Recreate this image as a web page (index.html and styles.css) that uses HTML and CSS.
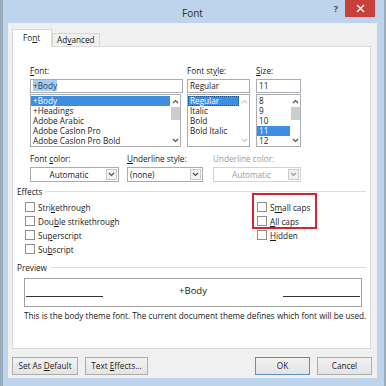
FILE: index.html
```html
<!DOCTYPE html>
<html>
  <head>
    <title>Font</title>
    <link rel="stylesheet" href="styles.css">
  </head>
  <body>
    <div class="window">
      <div class="titlebar">
        <span></span>
        <span class="title">Font</span>
        <div class="caption-btns">
          <span class="help">?</span>
          <span class="close">
            <svg width="9" height="9" viewBox="0 0 9 9"><path d="M1 1L8 8M8 1L1 8" stroke="#fff" stroke-width="1.4" /></svg>
          </span>
        </div>
      </div>

      <div class="client">
        <div class="tabs">
          <span class="tab active">Fo<u>n</u>t</span>
          <span class="tab">Ad<u>v</u>anced</span>
        </div>

        <div class="page">
          <!-- font / style / size pickers -->
          <div class="pickers">
            <div class="picker font-pick">
              <label><u>F</u>ont:</label>
              <div class="edit"><span class="sel-text">+Body</span></div>
              <div class="list">
                <div class="items">
                  <div class="item selected">+Body</div>
                  <div class="item">+Headings</div>
                  <div class="item">Adobe Arabic</div>
                  <div class="item">Adobe Caslon Pro</div>
                  <div class="item">Adobe Caslon Pro Bold</div>
                </div>
                <div class="scroll">
                  <span class="arrow"><svg width="7" height="5" viewBox="0 0 7 5"><path d="M1 4L3.5 1.5L6 4" /></svg></span>
                  <span class="thumb"></span>
                  <span class="spacer"></span>
                  <span class="arrow"><svg width="7" height="5" viewBox="0 0 7 5"><path d="M1 1L3.5 3.5L6 1" /></svg></span>
                </div>
              </div>
            </div>

            <div class="picker style-pick">
              <label>Font st<u>y</u>le:</label>
              <div class="edit">Regular</div>
              <div class="list">
                <div class="items">
                  <div class="item selected focus">Regular</div>
                  <div class="item">Italic</div>
                  <div class="item">Bold</div>
                  <div class="item">Bold Italic</div>
                </div>
                <div class="scroll disabled">
                  <span class="arrow"><svg width="7" height="5" viewBox="0 0 7 5"><path d="M1 4L3.5 1.5L6 4" /></svg></span>
                  <span class="spacer"></span>
                  <span class="arrow"><svg width="7" height="5" viewBox="0 0 7 5"><path d="M1 1L3.5 3.5L6 1" /></svg></span>
                </div>
              </div>
            </div>

            <div class="picker size-pick">
              <label><u>S</u>ize:</label>
              <div class="edit">11</div>
              <div class="list">
                <div class="items">
                  <div class="item">8</div>
                  <div class="item">9</div>
                  <div class="item">10</div>
                  <div class="item selected">11</div>
                  <div class="item">12</div>
                </div>
                <div class="scroll">
                  <span class="arrow"><svg width="7" height="5" viewBox="0 0 7 5"><path d="M1 4L3.5 1.5L6 4" /></svg></span>
                  <span class="thumb"></span>
                  <span class="spacer"></span>
                  <span class="arrow"><svg width="7" height="5" viewBox="0 0 7 5"><path d="M1 1L3.5 3.5L6 1" /></svg></span>
                </div>
              </div>
            </div>
          </div>

          <!-- colour / underline combos -->
          <div class="combos">
            <div class="combo-field color-field">
              <label>Font <u>c</u>olor:</label>
              <div class="combo">
                <span class="combo-text center">Automatic</span>
                <span class="combo-btn"><svg width="7" height="5" viewBox="0 0 7 5"><path d="M1 1L3.5 3.5L6 1" /></svg></span>
              </div>
            </div>
            <div class="combo-field uline-field">
              <label><u>U</u>nderline style:</label>
              <div class="combo">
                <span class="combo-text">(none)</span>
                <span class="combo-btn"><svg width="7" height="5" viewBox="0 0 7 5"><path d="M1 1L3.5 3.5L6 1" /></svg></span>
              </div>
            </div>
            <div class="combo-field ucolor-field disabled">
              <label>Underline color:</label>
              <div class="combo">
                <span class="combo-text center">Automatic</span>
                <span class="combo-btn"><svg width="7" height="5" viewBox="0 0 7 5"><path d="M1 1L3.5 3.5L6 1" /></svg></span>
              </div>
            </div>
          </div>

          <div class="group-head">Effects</div>
          <div class="effects">
            <div class="effects-col">
              <div class="check"><span class="box"></span>Stri<u>k</u>ethrough</div>
              <div class="check"><span class="box"></span>Dou<u>b</u>le strikethrough</div>
              <div class="check"><span class="box"></span>Su<u>p</u>erscript</div>
              <div class="check"><span class="box"></span>Su<u>b</u>script</div>
            </div>
            <div class="effects-col right">
              <div class="check"><span class="box"></span>S<u>m</u>all caps</div>
              <div class="check"><span class="box"></span><u>A</u>ll caps</div>
              <div class="check"><span class="box"></span><u>H</u>idden</div>
              <!-- red annotation box drawn over the screenshot -->
              <span class="highlight"></span>
            </div>
          </div>

          <div class="group-head preview-head">Preview</div>
          <div class="preview">
            <span class="pv-line"></span>
            <span class="pv-text">+Body</span>
            <span class="pv-line"></span>
          </div>
          <p class="desc">This is the body theme font. The current document theme defines which font will be used.</p>
        </div>

        <div class="buttons">
          <span class="btn default-btn">Set As <u>D</u>efault</span>
          <span class="btn effects-btn">Text <u>E</u>ffects...</span>
          <span class="spacer"></span>
          <span class="btn ok-btn">OK</span>
          <span class="btn cancel-btn">Cancel</span>
        </div>
      </div>
    </div>
  </body>
</html>
```

FILE: styles.css
```css
body {
  margin: 0;
  width: 386px;
  height: 386px;
  overflow: hidden;
  background: #9aabbd;
  font-family: "Open Sans", "Noto Sans", sans-serif;
  font-size: 8.2px;
  color: #1a1a1a;
}

u {
  text-underline-offset: 1px;
}

.window {
  margin-left: 3px;
  width: 381px;
  height: 386px;
  box-sizing: border-box;
  padding: 0 7px 8px 5px;
  background: #bdd4ec;
  display: flex;
  flex-direction: column;
}

/* title bar */
.titlebar {
  height: 23px;
  display: grid;
  grid-template-columns: 1fr auto 1fr;
  align-items: start;
}

.title {
  font-size: 10px;
  line-height: 23px;
  padding-top: 2px;
  color: #2b2b2b;
}

.caption-btns {
  justify-self: end;
  display: flex;
  align-items: center;
  margin-right: 2px;
}

.help {
  font-size: 9px;
  font-weight: bold;
  color: #3d4b5a;
  margin-right: 7px;
}

.close {
  width: 30px;
  height: 17px;
  background: #c8403a;
  display: flex;
  align-items: center;
  justify-content: center;
}

/* client area */
.client {
  flex: 1;
  background: #f0f0f0;
  padding: 6px 5px 3px 4px;
  display: flex;
  flex-direction: column;
}

.tabs {
  display: flex;
  align-items: flex-end;
  height: 18px;
  margin-bottom: -1px;
}

.tab {
  box-sizing: border-box;
  height: 14px;
  line-height: 12px;
  padding: 0 4px;
  border: 1px solid #d9d9d9;
  border-bottom: none;
  background: #f0f0f0;
}

.tab.active {
  position: relative;
  z-index: 1;
  height: 18px;
  line-height: 16px;
  padding: 0 11px 0 10px;
  background: #fff;
}

.page {
  flex: 1;
  margin-right: 1px;
  background: #fff;
  border: 1px solid #d9d9d9;
  padding: 18px 4px 0 4px;
  display: flex;
  flex-direction: column;
}

label {
  display: block;
  height: 12px;
  line-height: 12px;
  margin-bottom: 2px;
  white-space: nowrap;
}

/* pickers */
.pickers {
  display: flex;
  margin-left: 13px;
}

.font-pick {
  width: 153px;
  margin-right: 4px;
}

.style-pick {
  width: 63px;
  margin-right: 6px;
}

.size-pick {
  width: 45px;
}

.edit {
  box-sizing: border-box;
  height: 14px;
  line-height: 12px;
  padding-left: 2px;
  border: 1px solid #abadb3;
}

.sel-text {
  background: #a9cdf0;
  color: #1d3b66;
}

.list {
  box-sizing: border-box;
  height: 53px;
  margin-top: 1px;
  border: 1px solid #abadb3;
  display: flex;
}

.font-pick .list {
  margin-right: 2px;
}

.items {
  flex: 1;
  padding-top: 1px;
  overflow: hidden;
}

.item {
  height: 10px;
  line-height: 10px;
  padding-left: 2px;
  white-space: nowrap;
}

.item.selected {
  background: #3d8ee0;
  color: #fff;
}

.item.focus {
  box-sizing: border-box;
  padding-left: 1px;
  border: 1px dotted #1b4f8c;
  line-height: 8px;
}

.scroll {
  width: 10px;
  display: flex;
  flex-direction: column;
  align-items: center;
}

.scroll .arrow {
  height: 12px;
  display: flex;
  align-items: center;
  justify-content: center;
}

.scroll svg path,
.combo-btn svg path {
  fill: none;
  stroke: #505050;
  stroke-width: 1.2;
}

.scroll.disabled svg path {
  stroke: #c8c8c8;
}

.scroll .thumb {
  width: 9px;
  height: 13px;
  background: #cdcdcd;
}

.spacer {
  flex: 1;
}

/* combos */
.combos {
  display: flex;
  margin-left: 13px;
  margin-top: 6px;
}

.color-field {
  width: 89px;
  margin-right: 8px;
}

.uline-field {
  width: 76px;
  margin-right: 10px;
}

.ucolor-field {
  width: 88px;
}

.combo {
  box-sizing: border-box;
  height: 15px;
  border: 1px solid #acacac;
  display: flex;
  background: #fff;
}

.combo-text {
  flex: 1;
  line-height: 13px;
  padding-left: 2px;
}

.combo-text.center {
  text-align: center;
}

.combo-btn {
  box-sizing: border-box;
  width: 11px;
  margin: 1px;
  border: 1px solid #c9c9c9;
  background: #f2f2f2;
  display: flex;
  align-items: center;
  justify-content: center;
}

.disabled label,
.disabled .combo-text {
  color: #9c9c9c;
}

.disabled .combo {
  border-color: #d2d2d2;
}

.disabled .combo-btn svg path {
  stroke: #9c9c9c;
}

/* effects */
.group-head {
  display: flex;
  align-items: center;
  line-height: 12px;
  margin-top: 4px;
}

.group-head::after {
  content: "";
  flex: 1;
  height: 1px;
  margin: 0 0 2px 4px;
  background: #dcdcdc;
}

.effects {
  display: grid;
  grid-template-columns: 232px 1fr;
  margin-top: 2px;
  margin-left: 8px;
}

.effects-col.right {
  position: relative;
}

.check {
  display: flex;
  align-items: center;
  height: 14px;
  white-space: nowrap;
}

.box {
  box-sizing: border-box;
  width: 10px;
  height: 10px;
  margin-right: 3px;
  border: 1px solid #8f8f8f;
  background: #fff;
}

.highlight {
  position: absolute;
  left: -5px;
  top: -7px;
  width: 65px;
  height: 36px;
  box-sizing: border-box;
  border: 2px solid #d8232a;
}

/* preview */
.preview-head {
  margin-top: 6px;
}

.preview {
  box-sizing: border-box;
  height: 29px;
  margin: 4px 4px 0 7px;
  padding: 0 1px;
  border: 1px solid #a0a0a0;
  display: grid;
  grid-template-columns: 77px 1fr 77px;
  align-items: end;
}

.pv-line {
  height: 17px;
  border-bottom: 1px solid #333;
  margin-bottom: 10px;
}

.pv-text {
  text-align: center;
  font-size: 9.5px;
  line-height: 13px;
  margin-bottom: 10px;
}

.desc {
  margin: 3px 0 0 7px;
  line-height: 12px;
  white-space: nowrap;
}

/* bottom buttons */
.buttons {
  display: flex;
  gap: 7px;
  height: 18px;
  margin-top: 8px;
}

.btn {
  box-sizing: border-box;
  height: 18px;
  line-height: 16px;
  text-align: center;
  border: 1px solid #adadad;
  background: linear-gradient(#f2f2f2, #e4e4e4);
}

.default-btn {
  width: 66px;
}

.effects-btn {
  width: 63px;
}

.ok-btn {
  width: 55px;
  border-color: #5b8fc4;
}

.cancel-btn {
  width: 55px;
}

.buttons .spacer {
  flex: 1;
}
```
